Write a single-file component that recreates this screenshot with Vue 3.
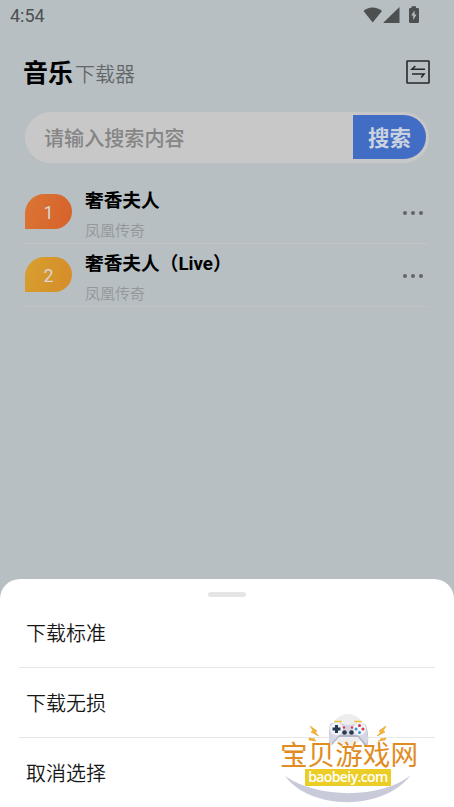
<script setup>
const songs = [
  { rank: 1, title: '奢香夫人', artist: '凤凰传奇' },
  { rank: 2, title: '奢香夫人（Live）', artist: '凤凰传奇' },
]
const actions = ['下载标准', '下载无损', '取消选择']
</script>

<template>
  <div class="screen">
    <div class="status">
      <span class="time">4:54</span>
      <svg class="status-icons" viewBox="0 0 58 20" width="58" height="20">
        <path d="M1.500 5C6 .2 15 .2 20 5L10.700 16.500Z" />
        <path d="M21.500 17V16.500L37.500 1V17Z" />
        <path d="M49.500 2V.3h4.500V2h1.700q1.300 0 1.300 1.300v12.400q0 1.300-1.300 1.300h-7.400q-1.300 0-1.300-1.300V3.300q0-1.300 1.300-1.300Z" />
        <path class="bolt" d="M52.500 4.500l-3.300 5h2v4.500l3.300-5.500h-2Z" />
      </svg>
    </div>
    <header class="header">
      <h1><b>音乐</b><span>下载器</span></h1>
      <svg class="switch" viewBox="0 0 24 24" width="24" height="24">
        <rect x="1" y="1" width="22" height="22" rx=".5" />
        <path d="M19 9.300H6L9.300 6M6 14H18L15.200 17.500" />
      </svg>
    </header>
    <div class="search">
      <span class="placeholder">请输入搜索内容</span>
      <button>搜索</button>
    </div>
    <ul class="songs">
      <li v-for="song in songs" :key="song.rank">
        <span class="badge" :class="'rank-' + song.rank">{{ song.rank }}</span>
        <div class="info">
          <strong>{{ song.title }}</strong>
          <span>{{ song.artist }}</span>
        </div>
        <div class="more"><i></i><i></i><i></i></div>
      </li>
    </ul>
    <section class="sheet">
      <div class="handle"></div>
      <div v-for="action in actions" :key="action" class="action">{{ action }}</div>
    </section>
    <div class="mark">
      <svg class="mark-art" viewBox="0 0 160 107" width="160" height="107">
        <circle cx="78" cy="30" r="16" fill="#ededee" />
        <path d="M15 76C40 110 112 112 141 75C112 99 48 99 15 76Z" fill="#c8cad9" />
        <path d="M60 24Q66 21 72 24L75 25H82L85 24Q91 21 96 25Q99 35 98 43Q97 48 94 45L88 37H69L63 44Q59 48 59 42Q59 31 60 24Z" fill="#b4b6c7" />
        <path d="M60 24Q66 21 72 24L75 25H82L85 24Q91 21 96 25L98 38Q98 46 95 43L88 35H69L62 43Q59 46 59 38Z" fill="#d5d6e3" />
        <path d="M65 22V21.500H71V22M85 22V21.500H91V22" fill="none" stroke="#efbd38" stroke-width="1.600" />
        <circle cx="66.500" cy="29" r="6.500" fill="#f2f2f8" />
        <circle cx="89.500" cy="29" r="6.500" fill="#f2f2f8" />
        <path d="M62.500 29H70.500M66.500 25V33" stroke="#27394e" stroke-width="3" />
        <g fill="#d83750"><circle cx="89.500" cy="25.500" r="1.500" /><circle cx="93" cy="29" r="1.500" /><circle cx="74" cy="27.500" r="1.200" /><circle cx="82" cy="27.500" r="1.200" /></g>
        <g fill="#3099c6"><circle cx="86" cy="29" r="1.500" /><circle cx="89.500" cy="32.500" r="1.500" /></g>
        <g fill="#27394e"><circle cx="74.500" cy="32.500" r="2.300" /><circle cx="81.500" cy="32.500" r="2.300" /></g>
        <g fill="#f4b62d" stroke="#e49a25" stroke-width=".6">
          <path d="M40 26L47 31L45 32L48.500 36L41 32L43 30.500Z" />
          <path d="M39 38L45 39L43 40L46 41L39 40Z" />
          <path d="M116 26L109 31L111 32L107 36L115 32L113 31Z" />
          <path d="M116 38L110 39L112 40L108 41L115 40Z" />
        </g>
      </svg>
      <div class="mark-name">宝贝游戏网</div>
      <div class="mark-url">baobeiy.com</div>
    </div>
  </div>
</template>

<style>
body { margin: 0; }
</style>

<style scoped>
* { box-sizing: border-box; }
.screen {
  position: relative;
  display: flex;
  flex-direction: column;
  width: 454px;
  height: 807px;
  overflow: hidden;
  background: #b7bfc2;
  font-family: Roboto, "Noto Sans CJK SC", sans-serif;
}
.status {
  display: flex;
  justify-content: space-between;
  height: 32px;
  padding: 6px 34px 0 10px;
  color: #4c5051;
}
.time { font-size: 18px; line-height: 20px; font-weight: 450; }
.status-icons { fill: #4c5051; }
.status-icons .bolt { fill: #b7bfc2; }
.header {
  display: flex;
  align-items: center;
  justify-content: space-between;
  height: 80px;
  padding: 0 24px 0 23px;
}
h1 { display: flex; align-items: baseline; margin: 5px 0 0; line-height: 36px; font-weight: 400; }
h1 b { font-size: 25px; color: #000; }
h1 span { margin-left: 2px; font-size: 20px; color: #62676a; font-weight: 350; }
.switch { fill: none; stroke: #26292b; stroke-width: 1.6; }
.search {
  display: flex;
  align-items: center;
  height: 51px;
  margin: 0 25px;
  padding: 0 3px 0 19px;
  border-radius: 26px;
  background: #c8c8c8;
}
.placeholder { flex: 1; color: #858585; font-size: 20.100px; font-weight: 500; }
.search button {
  width: 73px;
  height: 44px;
  margin-bottom: 1px;
  padding: 1px 0 0;
  border: 0;
  border-radius: 0 22px 22px 0;
  background: #416dc5;
  color: #cbd2df;
  font: 700 21.500px/45px Roboto, "Noto Sans CJK SC", sans-serif;
}
.songs { margin: 18px 26px 0 25px; padding: 0; list-style: none; }
.songs li {
  display: flex;
  align-items: flex-start;
  height: 63px;
  padding: 6px 5px 0 0;
  border-bottom: 1px solid #c1c3c4;
}
.badge {
  width: 47px;
  height: 35px;
  margin-top: 7px;
  border-radius: 20px 18px 18px 0;
  color: #d5d7d7;
  text-align: center;
  font-size: 18px;
  line-height: 37px;
}
.rank-1 { background: linear-gradient(110deg, #db7635, #d6612a); }
.rank-2 { background: linear-gradient(110deg, #d7a02f, #d68b29); }
.info { display: flex; flex: 1; flex-direction: column; margin-left: 13px; }
.info strong { font: 700 18.700px/28px Roboto, "Noto Sans CJK SC", sans-serif; color: #000; }
.info span { margin-top: 4px; font-size: 15px; line-height: 24px; color: #92979a; font-weight: 350; }
.more { display: flex; gap: 4px; margin-top: 24px; }
.more i { width: 4px; height: 4px; border-radius: 50%; background: #626668; }
.sheet {
  height: 228px;
  margin-top: auto;
  padding: 13px 19px 0;
  border-radius: 20px 20px 0 0;
  background: #fff;
}
.handle { width: 38px; height: 5px; margin: 0 auto 1px; border-radius: 3px; background: #e5e5e5; }
.action {
  height: 70px;
  padding: 2px 0 0 7px;
  border-bottom: 1px solid #e8e8e8;
  color: #171717;
  font-size: 20px;
  line-height: 69px;
  font-weight: 350;
}
.action:last-child { border-bottom: 0; }
.mark { position: absolute; left: 270px; top: 700px; width: 160px; height: 107px; }
.mark-art { position: absolute; inset: 0; }
.mark-name {
  position: relative;
  padding: 43px 0 0 10px;
  color: #e18c22;
  font-size: 27.600px;
  line-height: 26px;
  white-space: nowrap;
  text-shadow: 1px 0 #fff, -1px 0 #fff, 0 1px #fff;
}
.mark-url {
  position: relative;
  width: 86px;
  height: 17px;
  margin: 0 0 0 35px;
  background: #ebcd25;
  color: #fff;
  text-align: center;
  letter-spacing: -.6px;
  font: 600 14px/15px "Open Sans", sans-serif;
}
</style>
